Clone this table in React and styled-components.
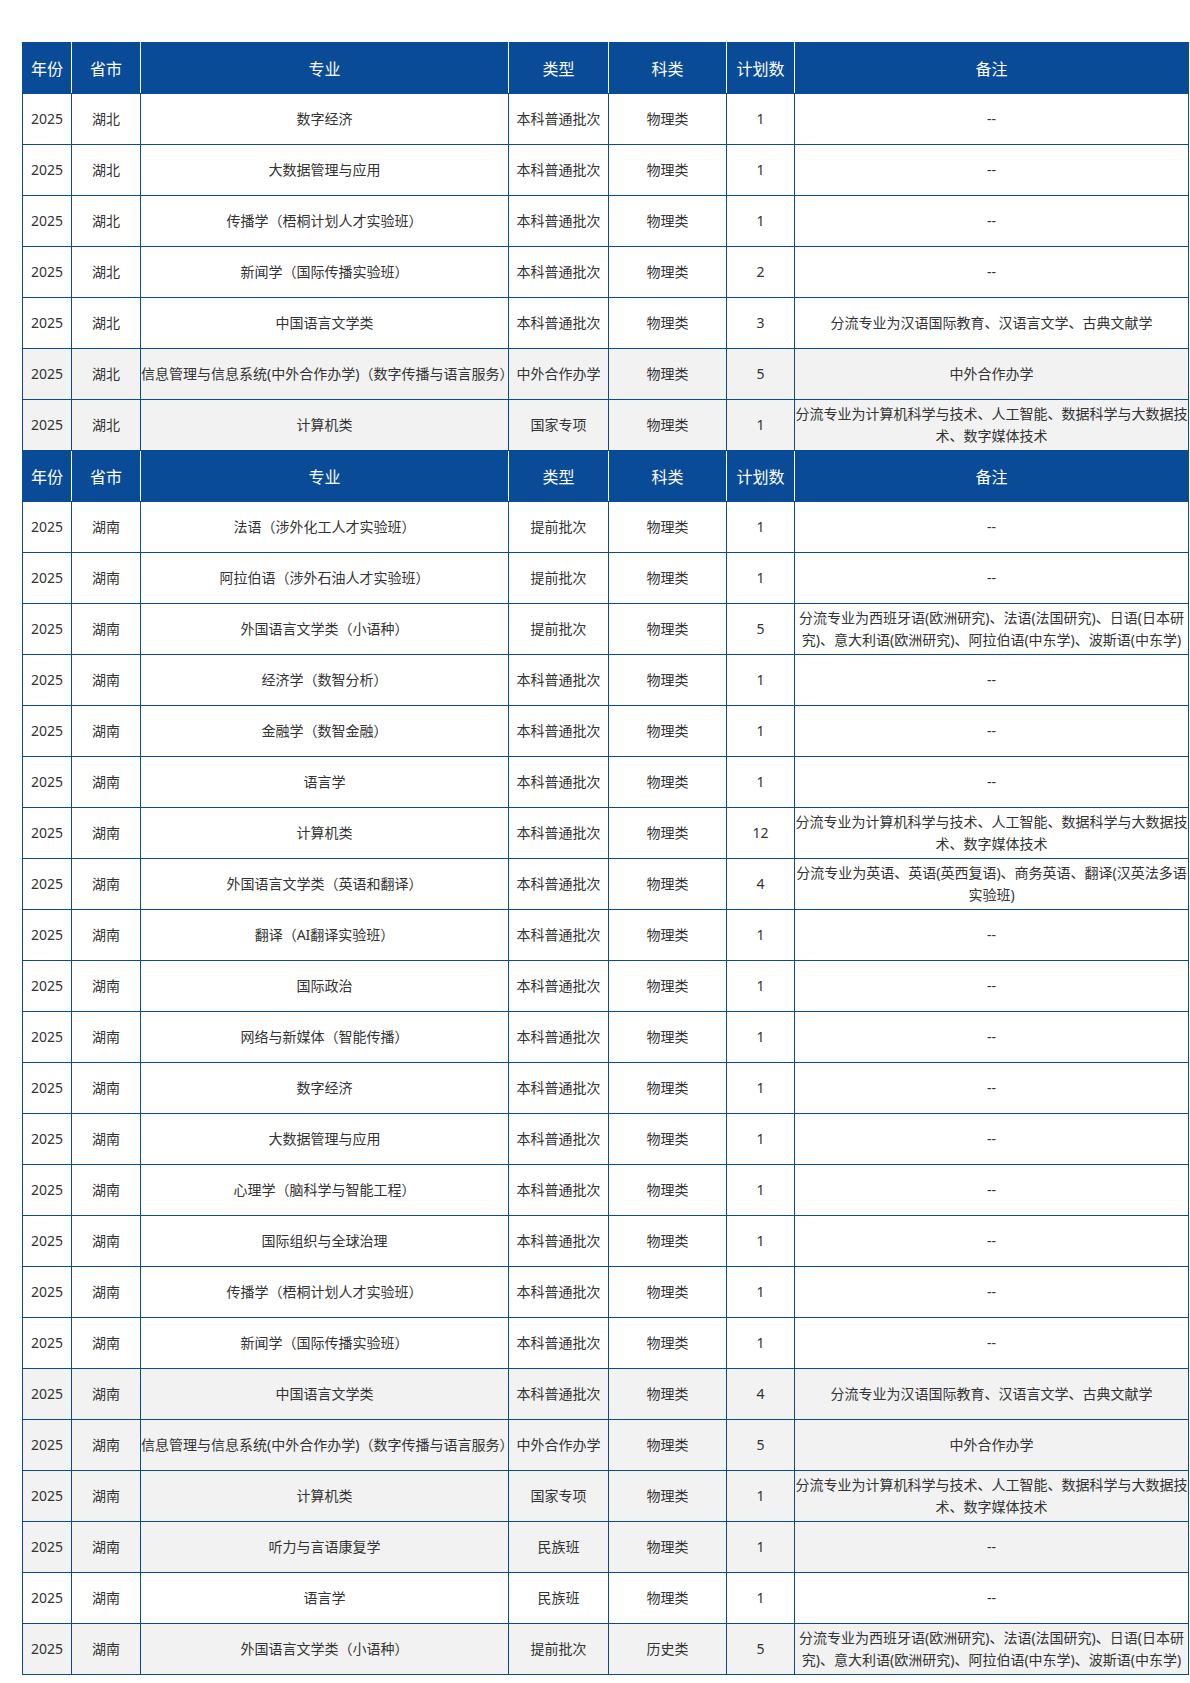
import React from 'react';
import styled, { createGlobalStyle } from 'styled-components';

const GlobalStyle = createGlobalStyle`
  body {
    margin: 0;
    background: #fff;
    font-family: 'Noto Sans', 'Noto Sans CJK SC', sans-serif;
    color: #333;
  }
`;

const BLUE = '#0a4b98';

const Page = styled.div`
  padding: 42px 0 10px 22px;
`;

const Table = styled.table`
  width: 1166px;
  table-layout: fixed;
  border-collapse: collapse;
  font-size: 14px;
`;

const HeadCell = styled.th`
  height: 50px;
  padding: 0;
  background: ${BLUE};
  color: #fff;
  font-size: 16px;
  font-weight: 400;
  text-align: center;
  vertical-align: middle;
  border-top: 1px solid ${BLUE};
  border-bottom: 1px solid ${BLUE};
  border-left: 1px solid #fff;
  border-right: 1px solid #fff;
  &:first-child {
    border-left-color: ${BLUE};
  }
  &:last-child {
    border-right-color: ${BLUE};
  }
`;

const Row = styled.tr`
  background: ${props => (props.$shaded ? '#f2f2f2' : '#fff')};
`;

const Cell = styled.td`
  height: 50px;
  padding: 0;
  border: 1px solid ${BLUE};
  text-align: center;
  vertical-align: middle;
  line-height: 22px;
  color: #333;
  white-space: ${props => (props.$nowrap ? 'nowrap' : 'normal')};
`;

const NoteLine = styled.span`
  display: block;
  white-space: nowrap;
`;

const columns = [
  { title: '年份', width: 49 },
  { title: '省市', width: 69 },
  { title: '专业', width: 368 },
  { title: '类型', width: 100 },
  { title: '科类', width: 118 },
  { title: '计划数', width: 68 },
  { title: '备注', width: 394 },
];

// multi-line remarks are kept as the lines they wrap into
const CS_NOTE = ['分流专业为计算机科学与技术、人工智能、数据科学与大数据技', '术、数字媒体技术'];
const CN_NOTE = '分流专业为汉语国际教育、汉语言文学、古典文献学';
const XYZ_NOTE = [
  '分流专业为西班牙语(欧洲研究)、法语(法国研究)、日语(日本研',
  '究)、意大利语(欧洲研究)、阿拉伯语(中东学)、波斯语(中东学)',
];
const EN_NOTE = ['分流专业为英语、英语(英西复语)、商务英语、翻译(汉英法多语', '实验班)'];
const INFO = '信息管理与信息系统(中外合作办学)（数字传播与语言服务）';

// [专业, 类型, 科类, 计划数, 备注, shaded]
const hubei = [
  ['数字经济', '本科普通批次', '物理类', 1, '--'],
  ['大数据管理与应用', '本科普通批次', '物理类', 1, '--'],
  ['传播学（梧桐计划人才实验班）', '本科普通批次', '物理类', 1, '--'],
  ['新闻学（国际传播实验班）', '本科普通批次', '物理类', 2, '--'],
  ['中国语言文学类', '本科普通批次', '物理类', 3, CN_NOTE],
  [INFO, '中外合作办学', '物理类', 5, '中外合作办学', true],
  ['计算机类', '国家专项', '物理类', 1, CS_NOTE, true],
];

const hunan = [
  ['法语（涉外化工人才实验班）', '提前批次', '物理类', 1, '--'],
  ['阿拉伯语（涉外石油人才实验班）', '提前批次', '物理类', 1, '--'],
  ['外国语言文学类（小语种）', '提前批次', '物理类', 5, XYZ_NOTE],
  ['经济学（数智分析）', '本科普通批次', '物理类', 1, '--'],
  ['金融学（数智金融）', '本科普通批次', '物理类', 1, '--'],
  ['语言学', '本科普通批次', '物理类', 1, '--'],
  ['计算机类', '本科普通批次', '物理类', 12, CS_NOTE],
  ['外国语言文学类（英语和翻译）', '本科普通批次', '物理类', 4, EN_NOTE],
  ['翻译（AI翻译实验班）', '本科普通批次', '物理类', 1, '--'],
  ['国际政治', '本科普通批次', '物理类', 1, '--'],
  ['网络与新媒体（智能传播）', '本科普通批次', '物理类', 1, '--'],
  ['数字经济', '本科普通批次', '物理类', 1, '--'],
  ['大数据管理与应用', '本科普通批次', '物理类', 1, '--'],
  ['心理学（脑科学与智能工程）', '本科普通批次', '物理类', 1, '--'],
  ['国际组织与全球治理', '本科普通批次', '物理类', 1, '--'],
  ['传播学（梧桐计划人才实验班）', '本科普通批次', '物理类', 1, '--'],
  ['新闻学（国际传播实验班）', '本科普通批次', '物理类', 1, '--'],
  ['中国语言文学类', '本科普通批次', '物理类', 4, CN_NOTE, true],
  [INFO, '中外合作办学', '物理类', 5, '中外合作办学', true],
  ['计算机类', '国家专项', '物理类', 1, CS_NOTE, true],
  ['听力与言语康复学', '民族班', '物理类', 1, '--', true],
  ['语言学', '民族班', '物理类', 1, '--'],
  ['外国语言文学类（小语种）', '提前批次', '历史类', 5, XYZ_NOTE, true],
];

const sections = [
  { province: '湖北', rows: hubei },
  { province: '湖南', rows: hunan },
];

function HeaderRow() {
  return (
    <tr>
      {columns.map(col => (
        <HeadCell key={col.title}>{col.title}</HeadCell>
      ))}
    </tr>
  );
}

function Note({ value }) {
  if (!Array.isArray(value)) return value;
  return value.map(line => <NoteLine key={line}>{line}</NoteLine>);
}

export default function App() {
  return (
    <Page>
      <GlobalStyle />
      <Table>
        <colgroup>
          {columns.map(col => (
            <col key={col.title} style={{ width: col.width }} />
          ))}
        </colgroup>
        {sections.map(({ province, rows }) => (
          <tbody key={province}>
            <HeaderRow />
            {rows.map(([major, batch, subject, plan, note, shaded], i) => (
              <Row key={i} $shaded={shaded}>
                <Cell>2025</Cell>
                <Cell>{province}</Cell>
                <Cell $nowrap>{major}</Cell>
                <Cell $nowrap>{batch}</Cell>
                <Cell>{subject}</Cell>
                <Cell>{plan}</Cell>
                <Cell>
                  <Note value={note} />
                </Cell>
              </Row>
            ))}
          </tbody>
        ))}
      </Table>
    </Page>
  );
}
